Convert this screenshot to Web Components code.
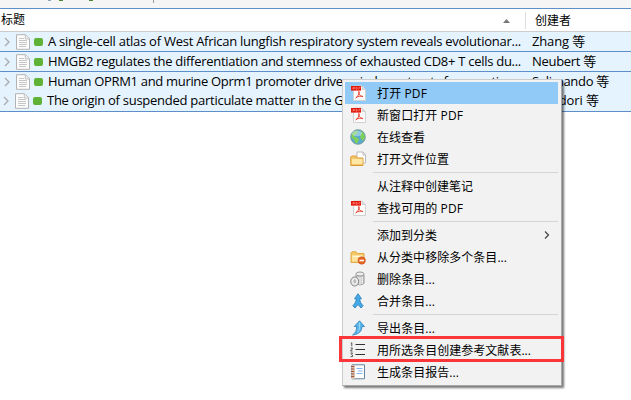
<!DOCTYPE html>
<html lang="zh-CN">
<head>
<meta charset="utf-8">
<title>Library</title>
<style>
html,body{margin:0;width:631px;height:400px;overflow:hidden;background:#fff}
body{font:13px/20px "Open Sans","Noto Sans CJK SC",sans-serif;color:#000}
</style>
</head>
<body>
<library-view></library-view>
<script>
const ICONS={
pdf:`<path d="M3.500 1h8.500l3.500 3.500v11h-12z" fill="#fbfbfb" stroke="#d2d2d2"/><path d="M12 1v3.500h3.500" fill="#ddd" stroke="#c9c9c9" stroke-width=".7"/><rect x="1" y="1" width="10" height="4.600" fill="#e5180c"/><path d="M3 4.300V2.500h1.500v1H3M6 2.500v1.700h1l.7-.8-.7-.9zM9 4.300V2.500h1.500" fill="none" stroke="#ff9c90" stroke-width=".6"/><path d="M8.600 6.500c2 0 0 4-2.800 6.500 1.500-1.700 5-2.500 7.200-1.500-2 .5-5-2.500-4.400-5z" fill="none" stroke="#ee4232" stroke-width="1"/>`,
globe:`<circle cx="8" cy="8" r="7.300" fill="#5ba9d2" stroke="#6f9a94" stroke-width=".9"/><path d="M2 5q3-4 6-3.500l-1 3-3 1.500 1 2 3 1 1 2-2 3.500-2-1-1-3-2.500-2zM10 2l3.500 2L15 8l-2 4-2-2-1-3 1.500-2z" fill="#7fd056"/><ellipse cx="7" cy="4.500" rx="5" ry="2.800" fill="#fff" opacity=".35"/>`,
open:`<path d="M7 1h6l2.500 2.500V12H7z" fill="#fff" stroke="#bbb"/><path d="M13 1v3h2.500" fill="none" stroke="#bbb"/><path d="M.7 14.500V6l1-1H6l1.500 2H13v7.500z" fill="#f4c568" stroke="#dfa23d"/><path d="M2 8h10.500v5H2z" fill="#ffe8a6"/><path d="M1 14.500h12" stroke="#dc9830"/>`,
remove:`<path d="M1 13.500V4l1-1.200h4L7.300 4.500H14v9z" fill="#f5c864" stroke="#e0aa46"/><path d="M2 6h11v6.500H2z" fill="#ffe29b"/><path d="M2.500 7.500h10" stroke="#fff7dc"/><circle cx="11.700" cy="11.500" r="3.700" fill="#e96524" stroke="#c95519" stroke-width=".6"/><path d="M9.500 11.500h4.400" stroke="#fff" stroke-width="1.600"/>`,
trash:`<path d="M6 4v8.500q4 3 8 0V4z" fill="#c8c8c8" stroke="#999"/><path d="M8 6v7M10 6v8M12.300 6v7" stroke="#f4f4f4"/><ellipse cx="10" cy="3" rx="4.200" ry="2" fill="#eee" stroke="#999"/><ellipse cx="4.700" cy="10.500" rx="4" ry="4.500" fill="#e5e5e5" stroke="#858585"/><ellipse cx="4.800" cy="10.300" rx="2" ry="2.600" fill="#bbb" stroke="#fff" stroke-width=".7"/>`,
merge:`<path d="M8 .7l3.500 5H9.800c0 3.500 1.500 5 3.400 7L11 15 8 11.500 5 15l-2.200-2.300c1.900-2 3.400-3.500 3.400-7H4.500z" fill="#44a9e5" stroke="#267eb9" stroke-width=".8"/>`,
exp:`<path d="M9.500 .8L14.500 6.500h-2.500c0 4.500-3 7.800-9.500 8.500 3-2 4.200-4.500 4.200-8.500H4.300z" fill="#59b5ea" stroke="#2c80b9" stroke-width=".8"/><path d="M9.500 2.500v5q0 3-2 5" stroke="#9ad8fa" fill="none"/>`,
list:`<path d="M5.500 2.500H15M5.500 7.500H15M5.500 12.500H15" stroke="#333" stroke-width="1"/><path d="M.8 1.500l1-.7v3.500M.5 6h1.800v1L.5 9h2M.5 11h2l-1 1.500 1 .6v1.500H.5" fill="none" stroke="#444" stroke-width=".9"/>`,
report:`<path d="M2 .8h12.500v14H2z" fill="#fff" stroke="#69839f"/><path d="M2 1h3v14H2z" fill="#d8c2b2"/><path d="M6.500 4.500h6M8 7h4.500M6.500 9.500h6" stroke="#85b6ef"/><path d="M1 2.500h3M1 5h3M1 7.500h3M1 10h3M1 12.500h3" stroke="#a55535"/>`,
page:`<path d="M1.500 .7h8.800l4.200 4v10.600h-13z" fill="#fcfcfc" stroke="#b3b3b3"/><path d="M10.300 1v4h4.200" fill="#eee" stroke="#b9b9b9" stroke-width=".8"/><path d="M4 4.500h5M4 6.500h8M4 8.500h8M4 10.500h8M4 12.500h7" stroke="#bebebe" stroke-width=".9"/>`};
class Base extends HTMLElement{constructor(){super();this.attachShadow({mode:'open'});}}
customElements.define('app-icon',class extends Base{connectedCallback(){this.shadowRoot.innerHTML=`<style>:host{display:block;width:16px;height:16px}svg{display:block}</style><svg width="16" height="16" viewBox="0 0 16 16">${ICONS[this.getAttribute('name')]}</svg>`}});
/* Text whose tracking is adjusted to fill a given width. */
customElements.define('fit-text',class extends Base{connectedCallback(){
 this.shadowRoot.innerHTML=`<style>:host{display:block;white-space:nowrap}span{display:inline-block}</style><span><slot></slot></span>`;
 const s=this.shadowRoot.querySelector('span'),w=+this.getAttribute('w');
 if(w)s.style.letterSpacing=(w-s.getBoundingClientRect().width)/this.textContent.length+'px';
}});
customElements.define('item-row',class extends Base{connectedCallback(){const a=n=>this.getAttribute(n);
 this.shadowRoot.innerHTML=`<style>:host{display:flex;box-sizing:border-box;height:20px;background:#e5f3ff;border-bottom:1px solid #5f8fc9;align-items:center;line-height:19px}
 :host([joined]){border-color:#e5f3ff}:host([last]){padding-bottom:2px}:host([last]) .lead{margin-left:-1px;margin-right:1px}
 .lead{display:flex;width:532px;flex:none;align-items:center}.chev{width:6px;height:10px;margin:0 5px 0 4px}.dot{width:9px;height:8px;border-radius:2px;background:#5fb236;margin:0 5px 0 3px}</style>
 <div class="lead"><svg class="chev" viewBox="0 0 6 10"><path d="M1 1l4 4-4 4" fill="none" stroke="#aaa" stroke-width="1.300"/></svg><app-icon name="page"></app-icon><i class="dot"></i><fit-text w="${a('w')}">${a('t')}</fit-text></div><fit-text w="${a('cw')}">${a('c')}</fit-text>`}});
customElements.define('menu-item',class extends Base{connectedCallback(){const i=this.getAttribute('icon');
 this.shadowRoot.innerHTML=`<style>:host{display:flex;height:22px;align-items:center;padding-left:5px;line-height:22px}:host([active]){background:#91c9f7}.i{width:27px;flex:none}fit-text{padding-top:2px}.arr{margin:0 8px 0 auto}</style><div class="i">${i?`<app-icon name="${i}"></app-icon>`:''}</div><fit-text w="${this.getAttribute('w')}">${this.getAttribute('t')}</fit-text>${this.hasAttribute('sub')?'<svg class="arr" width="6" height="10"><path d="M1 1.500l3.500 3.500L1 8.500" fill="none" stroke="#444" stroke-width="1.200"/></svg>':''}`}});
customElements.define('menu-sep',class extends Base{connectedCallback(){this.shadowRoot.innerHTML=`<style>:host{display:block;height:1px;margin:2px 0 2px 28px;background:#d5d5d5}</style>`}});
customElements.define('context-menu',class extends Base{connectedCallback(){this.shadowRoot.innerHTML=`<style>:host{display:block;box-sizing:border-box;width:220px;height:307px;padding:2px 3px 2px 2px;border:1px solid #a9a9a9;border-top-color:#ccc;border-left-color:#ccc;background:#f2f2f2;box-shadow:2px 2px 2px #0008;font-size:12px}</style><slot></slot>`}});
customElements.define('library-view',class extends Base{connectedCallback(){this.shadowRoot.innerHTML=`<style>
:host{display:block;position:relative;width:631px;height:400px}
.bar{height:8px;background:#f5f5f5;border-bottom:1px solid #5f8fc9}.bar svg{display:block}
.head{display:flex;height:22px;line-height:22px;font-size:12px;border-bottom:1px solid #ccc;align-items:center}
.c1{display:flex;width:525px;height:22px;box-sizing:border-box;padding:0 15px 0 1px;justify-content:space-between;align-items:center}
.c2{border-left:1px solid #ddd;height:17px;line-height:17px;padding-left:9px}
context-menu{position:absolute;left:342px;top:79px}.mark{position:absolute;left:339px;top:336px;width:219px;height:20px;border:3px solid #fb3538}
</style>
<div class="bar"><svg width="631" height="8"><path d="M48 0h3" stroke="#8aa4bd" stroke-width="2"/><path d="M59 0h4M89 0h4" stroke="#50882f" stroke-width="2"/><path d="M153.500 0v3" stroke="#999"/></svg></div>
<div class="head"><div class="c1"><fit-text w="24">标题</fit-text><svg width="7" height="5"><path d="M0 5l3.500-4L7 5z" fill="#777"/></svg></div><div class="c2"><fit-text w="36">创建者</fit-text></div></div>
<item-row w="473" t="A single-cell atlas of West African lungfish respiratory system reveals evolutionar..." c="Zhang 等" cw="53"></item-row>
<item-row w="473" t="HMGB2 regulates the differentiation and stemness of exhausted CD8+ T cells du..." c="Neubert 等" cw="64"></item-row>
<item-row joined w="466" t="Human OPRM1 and murine Oprm1 promoter driven viral constructs for genetic..." c="Salimando 等" cw="77"></item-row>
<item-row last w="306" t="The origin of suspended particulate matter in the G..." c="Mandori 等" cw="67"></item-row>
<context-menu>
<menu-item active icon="pdf" t="打开 PDF" w="50"></menu-item><menu-item icon="pdf" t="新窗口打开 PDF" w="86"></menu-item><menu-item icon="globe" t="在线查看" w="48"></menu-item><menu-item icon="open" t="打开文件位置" w="72"></menu-item><menu-sep></menu-sep>
<menu-item t="从注释中创建笔记" w="96"></menu-item><menu-item icon="pdf" t="查找可用的 PDF" w="86"></menu-item><menu-sep></menu-sep>
<menu-item sub t="添加到分类" w="60"></menu-item><menu-item icon="remove" t="从分类中移除多个条目..." w="130"></menu-item><menu-item icon="trash" t="删除条目..." w="58"></menu-item><menu-item icon="merge" t="合并条目..." w="58"></menu-item><menu-sep></menu-sep>
<menu-item icon="exp" t="导出条目..." w="58"></menu-item><menu-item icon="list" t="用所选条目创建参考文献表..." w="154"></menu-item><menu-item icon="report" t="生成条目报告..." w="82"></menu-item>
</context-menu><div class="mark"></div>`}});
</script>
</body>
</html>
